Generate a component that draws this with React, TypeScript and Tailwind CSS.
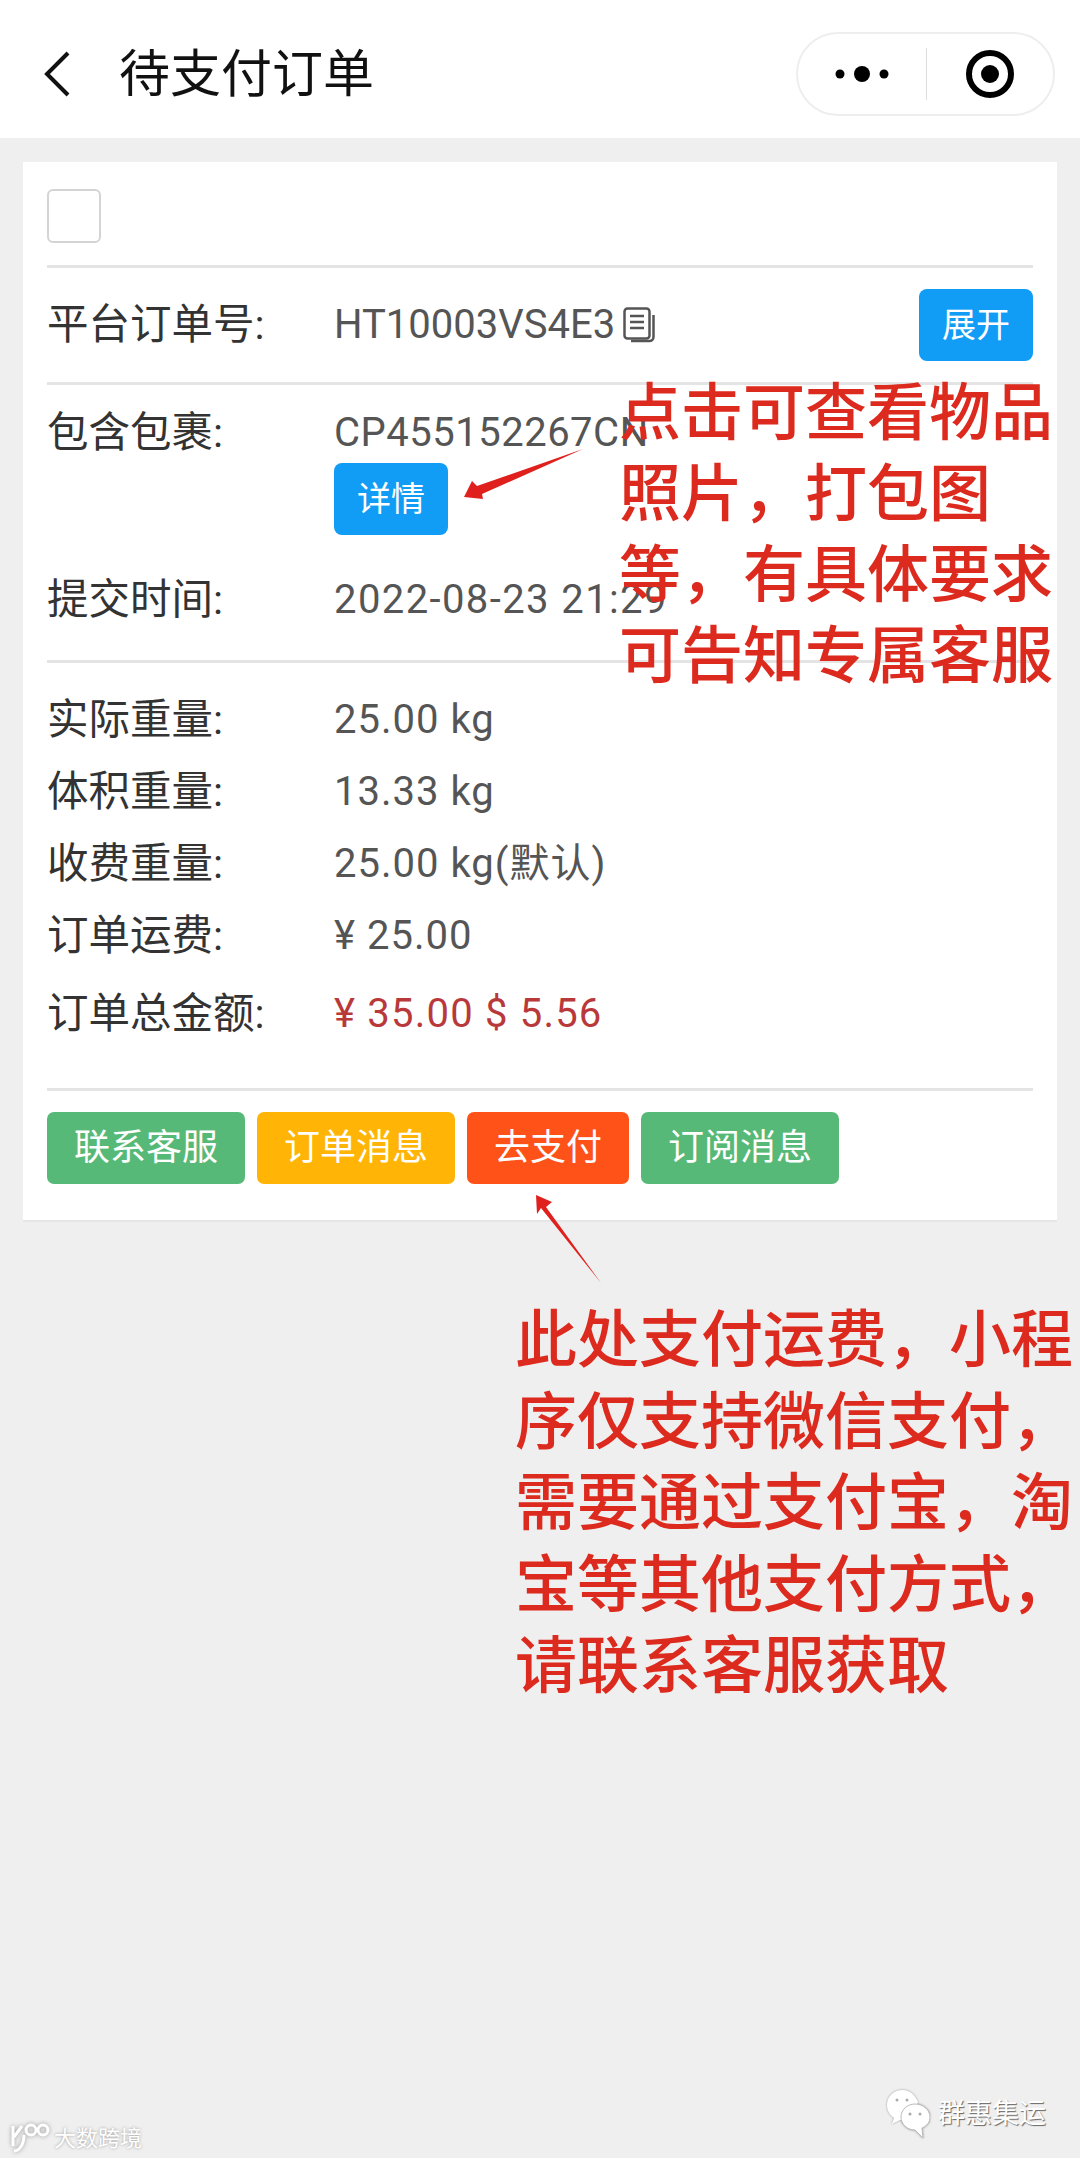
const Divider = () => <div className="h-[3px] bg-[#e4e4e4]" />;

const Row = ({ label, children, className = "", valueClass = "tracking-[1px] text-[#555]" }: { label: string; children: React.ReactNode; className?: string; valueClass?: string }) => (
  <div className={`flex h-[52px] items-center leading-[52px] ${className}`}>
    <span className="w-[287px] shrink-0 text-[41.5px] text-[#333]">{label}</span>
    <span className={`whitespace-nowrap ${valueClass}`}>{children}</span>
  </div>
);

const ACTIONS = [
  { label: "联系客服", width: "w-[198px]", color: "bg-[#57b978]" },
  { label: "订单消息", width: "w-[198px]", color: "bg-[#ffb406]" },
  { label: "去支付", width: "w-[162px]", color: "bg-[#ff5219]" },
  { label: "订阅消息", width: "w-[198px]", color: "bg-[#57b978]" },
];

const NOTE_ONE = ["点击可查看物品", "照片，打包图", "等，有具体要求", "可告知专属客服"];
const NOTE_TWO = ["此处支付运费，小程", "序仅支持微信支付，", "需要通过支付宝，淘", "宝等其他支付方式，", "请联系客服获取"];

export default function App() {
  return (
    <div className="relative h-[2158px] w-[1080px] overflow-hidden bg-[#efefef] font-['Roboto','Noto_Sans_CJK_SC',sans-serif] text-[40px]">
      <header className="flex h-[138px] items-center bg-white pl-[44px] pr-[25px] pt-[10px]">
        <svg width="26" height="46" viewBox="0 0 26 46" fill="none" stroke="#111" strokeWidth="4" className="shrink-0">
          <path d="M24 2 L3 23 L24 44" />
        </svg>
        <h1 className="ml-[49px] text-[51px] font-normal leading-none text-[#111]">待支付订单</h1>
        <div className="ml-auto flex h-[84px] w-[259px] items-center rounded-full border-2 border-[#eeeeee]">
          <div className="flex w-[128px] justify-center">
            <svg width="56" height="20" viewBox="0 0 56 20" fill="#000">
              <circle cx="6" cy="10" r="4.5" />
              <circle cx="28" cy="10" r="8" />
              <circle cx="50" cy="10" r="4.5" />
            </svg>
          </div>
          <div className="h-[52px] w-px bg-[#dddddd]" />
          <div className="flex flex-1 justify-center">
            <svg width="50" height="50" viewBox="0 0 50 50">
              <circle cx="25" cy="25" r="21" fill="none" stroke="#000" strokeWidth="6" />
              <circle cx="25" cy="25" r="9" fill="#000" />
            </svg>
          </div>
        </div>
      </header>

      <main className="mx-[23px] mt-[24px] border-b-2 border-[#e6e6e6] bg-white px-[24px] pb-[36px] pt-[27px]">
        <div className="mb-[22px] h-[54px] w-[54px] rounded-[6px] border-2 border-[#d4d4d4]" />
        <Divider />

        <div className="flex h-[114px] items-center">
          <span className="w-[287px] shrink-0 text-[41.5px] text-[#333]">平台订单号:</span>
          <span className="text-[#555]">HT10003VS4E3</span>
          <svg width="32" height="36" viewBox="0 0 32 36" fill="none" stroke="#555" strokeWidth="2.5" className="ml-[8px]">
            <rect x="1.5" y="1.5" width="25" height="30" rx="3" />
            <path d="M7 9h14M7 15h14M7 21h14" />
            <path d="M30.5 8v22a4 4 0 0 1-4 4H8" />
          </svg>
          <button className="ml-auto h-[72px] w-[114px] rounded-[8px] bg-[#119cf5] text-[34px] text-white">展开</button>
        </div>
        <Divider />

        <div className="pb-[34px] pt-[22px]">
          <Row label="包含包裹:" valueClass="tracking-[0.5px] text-[#555]">CP455152267CN</Row>
          <button className="ml-[287px] mt-[4px] block h-[72px] w-[114px] rounded-[8px] bg-[#119cf5] text-[34px] text-white">详情</button>
          <Row label="提交时间:" className="mt-[39px]" valueClass="tracking-[1.4px] text-[#555]">2022-08-23 21:29</Row>
        </div>
        <Divider />

        <div className="flex flex-col gap-[20px] pt-[31px]">
          <Row label="实际重量:">25.00 kg</Row>
          <Row label="体积重量:">13.33 kg</Row>
          <Row label="收费重量:">25.00 kg(默认)</Row>
          <Row label="订单运费:">¥ 25.00</Row>
          <Row label="订单总金额:" className="mt-[6px]" valueClass="tracking-[1.2px] text-[#b9393b]">¥ 35.00 $ 5.56</Row>
        </div>

        <div className="mt-[48px]">
          <Divider />
        </div>
        <div className="mt-[21px] flex gap-[12px]">
          {ACTIONS.map((action) => (
            <button key={action.label} className={`h-[72px] rounded-[7px] text-[36px] text-white ${action.width} ${action.color}`}>
              {action.label}
            </button>
          ))}
        </div>
      </main>

      {/* annotations drawn on top of the screenshot */}
      <div className="absolute left-[619px] top-[373px] whitespace-nowrap text-[62px] font-medium leading-[81px] text-[#dd2a1e]">
        {NOTE_ONE.map((line) => (
          <div key={line}>{line}</div>
        ))}
      </div>
      <div className="absolute left-[515px] top-[1300px] whitespace-nowrap text-[62px] font-medium leading-[81.5px] text-[#dd2a1e]">
        {NOTE_TWO.map((line) => (
          <div key={line}>{line}</div>
        ))}
      </div>

      <svg className="absolute left-0 top-0" width="1080" height="1300" fill="#e0201c">
        <path d="M464 497 L472 481 L477 486 L583 449 L482 494 L483 499 Z" />
        <path d="M536 1195 L552 1202 L546 1207 L601 1283 L541 1208 L537 1214 Z" />
      </svg>

      {/* watermarks */}
      <div className="absolute left-[10px] top-[2123px] flex items-center gap-[4px] text-[22px] leading-none text-white [text-shadow:0_0_3px_#999]">
        <svg width="40" height="32" viewBox="0 0 40 32" fill="none" stroke="#fff" strokeWidth="3" className="drop-shadow-[0_0_2px_#999]">
          <path d="M3 3v20M4 14 12 3M14 12C14 22 9 28 4 28" />
          <circle cx="21" cy="7" r="5" />
          <circle cx="33" cy="7" r="5" />
        </svg>
        <span>大数跨境</span>
      </div>
      <div className="absolute left-[886px] top-[2088px] flex items-center gap-[8px] text-[27px] leading-none text-white [text-shadow:1px_1px_1px_#666]">
        <svg width="44" height="52" viewBox="0 0 44 52" className="drop-shadow-[0_0_1px_#999]">
          <path d="M17 2C8 2 1 8 1 17c0 6 3 10 7 13l-2 6 8-4c4 0 8 0 11-2L32 14C29 7 24 2 17 2Z" fill="#fff" />
          <path d="M29 16c-8 0-14 6-14 13s6 13 14 13l8 8-1-10c5-2 8-6 8-11 0-7-7-13-15-13Z" fill="#fff" stroke="#bbb" />
          <circle cx="11" cy="12" r="1.5" fill="#aaa" />
          <circle cx="21" cy="12" r="1.5" fill="#aaa" />
          <circle cx="24" cy="26" r="1.5" fill="#aaa" />
          <circle cx="34" cy="26" r="1.5" fill="#aaa" />
        </svg>
        <span>群惠集运</span>
      </div>
    </div>
  );
}
